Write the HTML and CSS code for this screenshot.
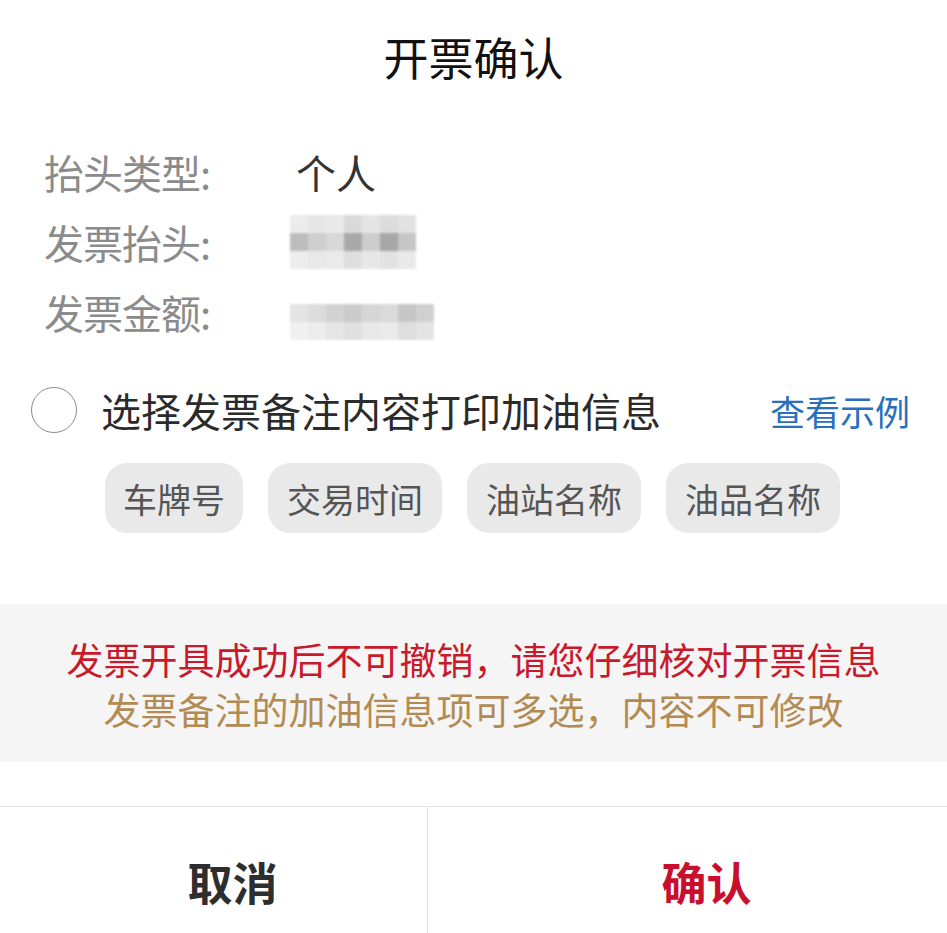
FILE: index.html
```html
<!DOCTYPE html>
<html lang="zh-CN">
<head>
<meta charset="utf-8">
<title>开票确认</title>
<link rel="stylesheet" href="styles.css">
</head>
<body>
<div class="dialog">
  <h1 class="title">开票确认</h1>
  <div class="info">
    <div class="row"><span class="label">抬头类型:</span><span class="value">个人</span></div>
    <div class="row"><span class="label">发票抬头:</span>
      <span class="mosaic m2">
        <i style="background:#ececec"></i><i style="background:#e6e6e6"></i><i style="background:#e9e9e9"></i><i style="background:#dadada"></i><i style="background:#e4e4e4"></i><i style="background:#dcdcdc"></i><i style="background:#e2e2e2"></i>
        <i style="background:#bdbdbd"></i><i style="background:#cfcfcf"></i><i style="background:#d8d8d8"></i><i style="background:#a9a9a9"></i><i style="background:#cdcdcd"></i><i style="background:#a7a7a7"></i><i style="background:#c6c6c6"></i>
        <i style="background:#ededed"></i><i style="background:#e8e8e8"></i><i style="background:#eaeaea"></i><i style="background:#dedede"></i><i style="background:#e7e7e7"></i><i style="background:#e2e2e2"></i><i style="background:#e9e9e9"></i>
      </span>
    </div>
    <div class="row"><span class="label">发票金额:</span>
      <span class="mosaic m3">
        <i style="background:#e4e4e4"></i><i style="background:#dcdcdc"></i><i style="background:#d2d2d2"></i><i style="background:#cbcbcb"></i><i style="background:#d6d6d6"></i><i style="background:#dadada"></i><i style="background:#c6c6c6"></i><i style="background:#d0d0d0"></i>
        <i style="background:#f0f0f0"></i><i style="background:#ececec"></i><i style="background:#e6e6e6"></i><i style="background:#e0e0e0"></i><i style="background:#e8e8e8"></i><i style="background:#eaeaea"></i><i style="background:#dedede"></i><i style="background:#e4e4e4"></i>
      </span>
    </div>
  </div>
  <div class="option">
    <span class="radio"></span>
    <span class="option-text">选择发票备注内容打印加油信息</span>
    <a class="example">查看示例</a>
  </div>
  <div class="chips">
    <span class="chip">车牌号</span>
    <span class="chip">交易时间</span>
    <span class="chip">油站名称</span>
    <span class="chip">油品名称</span>
  </div>
  <div class="notice">
    <p class="warn">发票开具成功后不可撤销，请您仔细核对开票信息</p>
    <p class="tip">发票备注的加油信息项可多选，内容不可修改</p>
  </div>
  <div class="actions">
    <button class="btn cancel">取消</button>
    <button class="btn confirm">确认</button>
  </div>
</div>
</body>
</html>
```
FILE: styles.css
```css
* { box-sizing: border-box; }
html, body {
  margin: 0;
  padding: 0;
  background: #ffffff;
  font-family: "Noto Sans CJK SC", "Noto Sans", sans-serif;
  overflow: hidden;
}
.dialog {
  width: 947px;
  display: flex;
  flex-direction: column;
}
.title {
  margin: 0;
  padding-top: 28px;
  font-size: 45px;
  line-height: 58px;
  font-weight: 400;
  color: #111111;
  text-align: center;
}
.info {
  margin-top: 51px;
  padding-left: 44px;
  display: flex;
  flex-direction: column;
}
.row {
  height: 70px;
  display: flex;
  align-items: center;
  font-size: 40px;
}
.label {
  width: 252px;
  color: #8b8b8b;
  letter-spacing: -1px;
}
.value {
  color: #333333;
}
.mosaic {
  display: grid;
  filter: blur(1.2px);
}
.mosaic i { display: block; }
.m2 {
  margin-left: -6px;
  grid-template-columns: repeat(7, 18px);
  grid-template-rows: repeat(3, 18px);
}
.m3 {
  margin-left: -6px;
  margin-top: 20px;
  grid-template-columns: repeat(8, 18px);
  grid-template-rows: repeat(2, 18px);
}
.option {
  margin-top: 33px;
  height: 60px;
  padding: 0 37px 0 31px;
  display: flex;
  align-items: center;
}
.radio {
  width: 46px;
  height: 46px;
  border: 1.5px solid #8a8a8a;
  border-radius: 50%;
  flex: none;
}
.option-text {
  margin-left: 24px;
  font-size: 40px;
  color: #2b2b2b;
  flex: 1;
}
.example {
  font-size: 35px;
  color: #2a6fbe;
}
.chips {
  margin-top: 23px;
  padding-left: 105px;
  display: flex;
  gap: 25px;
}
.chip {
  height: 70px;
  padding: 0 19px;
  display: flex;
  align-items: center;
  background: #e9e9e9;
  border-radius: 22px;
  font-size: 34px;
  color: #555555;
}
.chip:first-child {
  padding: 0 18px;
}
.notice {
  margin-top: 71px;
  background: #f5f5f5;
  padding: 30px 0 28px;
  text-align: center;
  font-size: 37px;
  line-height: 50px;
}
.notice p { margin: 0; }
.warn { color: #c8192d; }
.tip { color: #b38b52; }
.actions {
  margin-top: 44px;
  border-top: 1.5px solid #e6e6e6;
  display: flex;
}
.btn {
  flex: 1;
  height: 148px;
  border: none;
  background: #ffffff;
  font-family: inherit;
  font-size: 45px;
  font-weight: 700;
  padding: 0 0 0 38px;
}
.cancel {
  color: #2e2e2e;
  border-right: 1.5px solid #e6e6e6;
  flex: 0 0 428px;
}
.confirm {
  color: #c8102e;
}
```
